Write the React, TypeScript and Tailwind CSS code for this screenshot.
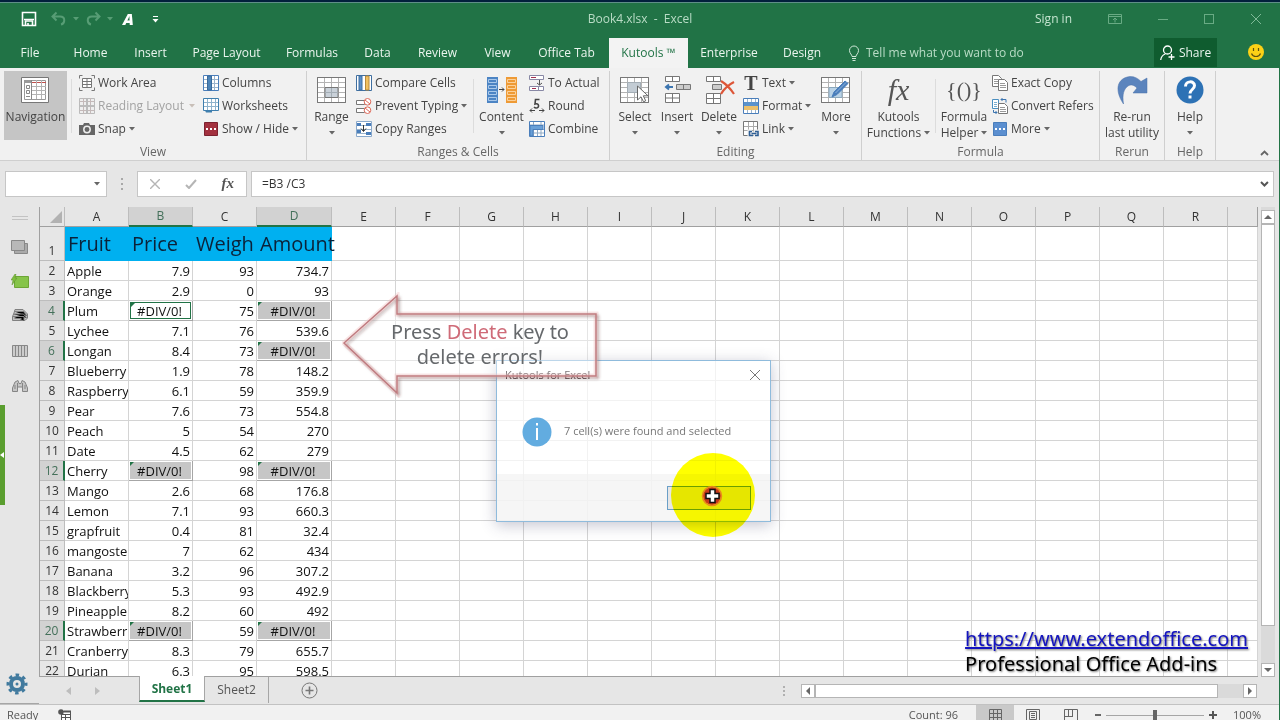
import type { ReactNode } from 'react'

const fruits: [string, string, string, string][] = [
  ['Apple', '7.9', '93', '734.7'],
  ['Orange', '2.9', '0', '93'],
  ['Plum', '#DIV/0!', '75', '#DIV/0!'],
  ['Lychee', '7.1', '76', '539.6'],
  ['Longan', '8.4', '73', '#DIV/0!'],
  ['Blueberry', '1.9', '78', '148.2'],
  ['Raspberry', '6.1', '59', '359.9'],
  ['Pear', '7.6', '73', '554.8'],
  ['Peach', '5', '54', '270'],
  ['Date', '4.5', '62', '279'],
  ['Cherry', '#DIV/0!', '98', '#DIV/0!'],
  ['Mango', '2.6', '68', '176.8'],
  ['Lemon', '7.1', '93', '660.3'],
  ['grapfruit', '0.4', '81', '32.4'],
  ['mangoste', '7', '62', '434'],
  ['Banana', '3.2', '96', '307.2'],
  ['Blackberry', '5.3', '93', '492.9'],
  ['Pineapple', '8.2', '60', '492'],
  ['Strawberr', '#DIV/0!', '59', '#DIV/0!'],
  ['Cranberry', '8.3', '79', '655.7'],
  ['Durian', '6.3', '95', '598.5'],
]

const columns = 'ABCDEFGHIJKLMNOPQR'.split('')
const emptyColumns = [...columns.slice(4), 'S']

const tabs = [
  { name: 'File', width: 'w-[60px]' },
  { name: 'Home', width: 'w-[61px]' },
  { name: 'Insert', width: 'w-[59px]' },
  { name: 'Page Layout', width: 'w-[93px]' },
  { name: 'Formulas', width: 'w-[78px]' },
  { name: 'Data', width: 'w-[53px]' },
  { name: 'Review', width: 'w-[67px]' },
  { name: 'View', width: 'w-[53px]' },
  { name: 'Office Tab', width: 'w-[85px]' },
  { name: 'Kutools ™', width: 'w-[79px]' },
  { name: 'Enterprise', width: 'w-[82px]' },
  { name: 'Design', width: 'w-[64px]' },
]

function Caret({ className = 'text-[#666]' }: { className?: string }) {
  return (
    <svg viewBox="0 0 6 4" className={`h-1 w-1.5 shrink-0 ${className}`} fill="currentColor">
      <path d="M0 0h6L3 3.5z" />
    </svg>
  )
}

function Icon({ children, size = 16 }: { children: ReactNode; size?: 16 | 32 }) {
  return (
    <svg
      viewBox={size === 16 ? '0 0 16 16' : '0 0 32 28'}
      className={size === 16 ? 'h-4 w-4 shrink-0' : 'h-7 w-8 shrink-0'}
      fill="none"
      stroke="#777"
    >
      {children}
    </svg>
  )
}

/* ---- large ribbon icons, 32x28 ---- */

const sheetGrid = (
  <>
    <path d="M1.5 1.5h28v25h-28z" fill="#fff" />
    <path d="M2 6.5h27M2 11.5h27M2 16.5h27M2 21.5h27M8.5 2v24M15.5 2v24M22.5 2v24" stroke="#b3b3b3" />
    <path d="M1.5 1.5h28v25h-28z" />
  </>
)

const NavigationIcon = () => (
  <Icon size={32}>
    <path d="M1.5 1.5h27v25h-27z" fill="#fff" />
    <path d="M4.5 4.5h21v19h-21z" stroke="#999" fill="#fff" />
    <path d="M4 4h8v3H4z" fill="#999" stroke="none" />
    <path d="M12 6.5h14" stroke="#c0504d" />
    <path d="M12 10.5h14M12 14.5h14M12 18.5h14M16.5 4v19M21.5 4v19" stroke="#b3b3b3" />
    <path d="M11.5 4v19M6.5 9.5h3v3h-3zM6.5 14.5h3v3h-3zM6 20.5h4" stroke="#888" />
  </Icon>
)

const RangeIcon = () => (
  <Icon size={32}>
    {sheetGrid}
    <path d="M9 11.5h13v10H9z" fill="#c9d1d9" stroke="#777" />
    <path d="M9 16.5h13M15.5 12v9" stroke="#a3adb5" />
  </Icon>
)

const ContentIcon = () => (
  <Icon size={32}>
    <path d="M1 1h11v26H1z" fill="#4c84c4" stroke="none" />
    <path d="M20 1h11v26H20z" fill="#ee9a35" stroke="none" />
    <path d="M2.5 3.5h8v3h-8zM2.5 9.5h8v3h-8zM2.5 15.5h8v3h-8zM2.5 21.5h8v3h-8z" stroke="#a9c8ea" />
    <path d="M21.5 3.5h8v3h-8zM21.5 9.5h8v3h-8zM21.5 15.5h8v3h-8zM21.5 21.5h8v3h-8z" stroke="#fbd19b" />
    <path d="M13 13.5h5M16 11.5l2 2-2 2" stroke="#444" />
  </Icon>
)

const SelectIcon = () => (
  <Icon size={32}>
    {sheetGrid}
    <path d="M8.5 6.5h13v10h-13z" fill="#c3ccd4" stroke="#a3adb5" />
    <path d="M18.5 10v14l3.5-3.2 2.5 5 2.2-1-2.4-5h4.7z" fill="#fff" stroke="#666" />
  </Icon>
)

const InsertIcon = () => (
  <Icon size={32}>
    <path d="M4.5.5h14v5h-14zM11.5.5v5M4.5 17.5h14v9h-14zM11.5 17.5v9M4.5 22h14" fill="#fff" />
    <path d="M15.5 8.5h14v5h-14zM22.5 8.5v5" fill="#ccc" />
    <path d="M5 11h7M8 8.5L5 11l3 2.5" stroke="#3c75b0" strokeWidth="2" />
  </Icon>
)

const DeleteIcon = () => (
  <Icon size={32}>
    <path d="M3.5.5h14v5h-14zM10.5.5v5M3.5 17.5h14v10h-14zM10.5 17.5v10M3.5 22.5h14" fill="#fff" />
    <path d="M9.5 8.5h9v5h-9z" fill="#ccc" />
    <path d="M18 5c5 3 9 7 13 13M31 6c-6 3-10 7-13 12" stroke="#dd5638" strokeWidth="2.2" />
  </Icon>
)

const MoreIcon = () => (
  <Icon size={32}>
    {sheetGrid}
    <path d="M9 11.5h13v10H9z" fill="#b9d2e6" stroke="#8ba8bd" />
    <path d="M12 21l2-5L25 5l3 2.5L17 18.5z" fill="#4a7ebb" stroke="#4a7ebb" />
    <path d="M15.5 17L26 6.5" stroke="#8fb3de" />
  </Icon>
)

const FxIcon = () => (
  <span className="flex h-7 items-center font-['Liberation_Serif',serif] text-[30px] leading-7 text-[#555] italic">fx</span>
)

const BracesIcon = () => (
  <span className="flex h-7 items-center font-['Liberation_Serif',serif] text-[22px] leading-7 text-[#555]">{'{()}'}</span>
)

const RerunIcon = () => (
  <Icon size={32}>
    <path d="M7.5 28C-2 14 1 2 14 .5c5 0 8 2 11 5L31 2v15H17l4-5c-3-3-6-4-9-2-4 3-6 8-4.5 18z" fill="#5b84bd" stroke="#4a70a8" strokeWidth=".5" />
  </Icon>
)

const HelpIcon = () => (
  <Icon size={32}>
    <circle cx="16" cy="14" r="13.5" fill="#2d72b5" stroke="none" />
    <path d="M11.5 10.5c0-6 9-6 9-1 0 4-4.5 4-4.5 8" stroke="#fff" strokeWidth="3" />
    <path d="M14.5 19.5h3v3h-3z" fill="#fff" stroke="none" />
  </Icon>
)

/* ---- small ribbon icons, 16x16 ---- */

const WorkAreaIcon = () => (
  <Icon>
    <path d="M3.5.5h-3v3M12.5.5h3v3M.5 12.5v3h3M15.5 12.5v3h-3" />
    <path d="M3.5 3.5h9v9h-9zM3.5 6.5h9M3.5 9.5h9M8 3.5v9" fill="#fff" />
  </Icon>
)

const ReadingIcon = () => (
  <Icon>
    <path d="M.5.5h15v15H.5z" fill="#eee" stroke="#bbb" />
    <path d="M.5 3.5h15M.5 12.5h15M4.5 0v16M11.5 0v16" stroke="#c4b9b9" />
    <path d="M.5 8h15M8 0v16" stroke="#bbb" strokeWidth="2" />
  </Icon>
)

const SnapIcon = () => (
  <Icon>
    <path d="M0 4h4l1-2h5l1 2h5v10H0z" fill="#666" stroke="none" />
    <circle cx="8" cy="8.5" r="3.2" stroke="#eee" strokeWidth="1.5" />
  </Icon>
)

const ColumnsIcon = () => (
  <Icon>
    <path d="M.5.5h15v15H.5z" fill="#fff" stroke="#4a7ebb" />
    <path d="M1 4.5h14M1 8.5h14M1 12.5h14M11.5 1v14" stroke="#9bb4cc" />
    <path d="M4.5 1h4v14h-4z" fill="#4c84b8" stroke="#39699b" />
  </Icon>
)

const WorksheetsIcon = () => (
  <Icon>
    <path d="M.5.5h15v12H.5z" fill="#fff" stroke="#3f7fae" />
    <path d="M1 4.5h14M1 8.5h14M4.5 1v11M8.5 1v11M12.5 1v11" stroke="#8fb3cc" />
    <path d="M2 12.5h7v2H3z" fill="#3f7fae" stroke="none" />
  </Icon>
)

const ShowHideIcon = () => (
  <Icon>
    <path d="M1.5 1.5h13v13h-13z" fill="#a3313f" stroke="#7c2230" />
    <path d="M3 8h2M7 8h2M11 8h2" stroke="#fff" strokeWidth="2" />
  </Icon>
)

const CompareIcon = () => (
  <Icon>
    <path d="M.5.5h15v15H.5z" fill="#fff" stroke="#3f6fa0" />
    <path d="M3 1h3v14H3z" fill="#5b8fc9" stroke="#3f6fa0" />
    <path d="M9.5 1H13v14H9.5z" fill="#f0c060" stroke="#b8893a" />
  </Icon>
)

const PreventIcon = () => (
  <Icon>
    <path d="M.5 2.5h8v4h-8zM.5 10.5h8v4h-8z" fill="#fff" />
    <circle cx="11.5" cy="3.8" r="3.3" stroke="#dd6a5a" fill="#fff" />
    <circle cx="11.5" cy="12.2" r="3.3" stroke="#dd6a5a" fill="#fff" />
    <path d="M9 2l5 4M9 10l5 4" stroke="#dd6a5a" />
  </Icon>
)

const CopyRangesIcon = () => (
  <Icon>
    <path d="M.5.5h15v15H.5z" fill="#fff" stroke="#8aa9cb" />
    <path d="M1 4.5h14M1 8.5h14M1 12.5h14" stroke="#9bb4cc" />
    <path d="M1 2h4v3H1zM10 2h5v3h-5zM1 9h4v3H1zM10 11h5v3h-5z" fill="#4a7ebb" stroke="none" />
    <path d="M7.5 4v6M5 7.5l2.5 3 2.5-3" stroke="#333" />
  </Icon>
)

const ToActualIcon = () => (
  <Icon>
    <path d="M.5.5h14v4H.5zM.5 11.5h9v4h-9zM9.5 11.5h5v4h-5z" fill="#fff" stroke="#8888a5" />
    <path d="M2 2.5h5M3 13.5h4" stroke="#a33050" />
    <path d="M10.5 5v5M8 8l2.5 2L13 8" stroke="#555" />
  </Icon>
)

const RoundIcon = () => (
  <Icon>
    <path d="M10.5 1.5h-4L6 6c4-1.5 5 4 1 4-1 0-1.5-.5-2-1" stroke="#444" strokeWidth="1.6" />
    <path d="M6 12.5H1M3 10.5l-2 2 2 2M10 12.5h5M13 10.5l2 2-2 2" stroke="#444" />
  </Icon>
)

const CombineIcon = () => (
  <Icon>
    <path d="M.5.5h15v15H.5z" fill="#fff" stroke="#4a7ebb" />
    <path d="M1 4h14M1 8.5h14M1 12h14M4.5 1v14M8.5 8v7M12 1v14" stroke="#8fa9c4" />
    <path d="M1 4.5h13v4H4V15H1z" fill="#69a0d8" stroke="#4a7ebb" />
  </Icon>
)

const TextIcon = () => (
  <span className="w-4 text-center font-['Liberation_Serif',serif] text-[20px] leading-4 font-bold text-[#444]">T</span>
)

const FormatIcon = () => (
  <Icon>
    <path d="M.5.5h15v15H.5z" fill="#fff" stroke="#4a7ebb" />
    <path d="M4.5 1v14M8.5 1v14M12.5 1v14" stroke="#9bb4cc" />
    <path d="M1 4h14v4H1z" fill="#5b93cc" stroke="none" />
    <path d="M1 8h14v4H1z" fill="#ecc06a" stroke="none" />
  </Icon>
)

const LinkIcon = () => (
  <Icon>
    <path d="M.5.5h14v14H.5z" fill="#fff" />
    <path d="M1 5.5h13M1 9.5h13M5.5 1v13M10.5 1v13" stroke="#aaa" />
    <path d="M9 10.5H6.5v4H9M11 10.5h4v4h-4M8 12.5h5" stroke="#f0f0f0" strokeWidth="4" />
    <path d="M9 10.5H6.5v4H10M12 10.5h3v4h-3M8.5 12.5h5" stroke="#2f5f95" strokeWidth="1.6" />
  </Icon>
)

const ExactCopyIcon = () => (
  <Icon>
    <path d="M.5.5h6l3 3v8h-9z" fill="#fff" />
    <path d="M2 4.5h4M2 6.5h4M2 8.5h4" stroke="#999" />
    <path d="M6.5 4.5h6l3 3v8h-9z" fill="#fff" />
    <path d="M8 8.5h5M8 10.5h6M8 12.5h6" stroke="#999" />
  </Icon>
)

const ConvertIcon = () => (
  <Icon>
    <path d="M.5 1.5h6v9h-6z" fill="#fff" stroke="#4a8fc0" />
    <path d="M2 4.5h3M2 6.5h3M2 8.5h3" stroke="#7aaed0" />
    <path d="M6.5 5.5h6l3 3v7h-9z" fill="#fff" />
    <path d="M8 9.5h5M8 11.5h6M8 13.5h6" stroke="#999" />
    <path d="M9 1.5h5v3M10.5 0L9 1.5 10.5 3M1.5 12v2.5H5M3.5 13L5 14.5 3.5 16" stroke="#3c75b0" />
  </Icon>
)

const BlueMoreIcon = () => (
  <Icon>
    <path d="M1.5 1.5h13v13h-13z" fill="#5b8fd0" stroke="#4a7ebb" />
    <path d="M3 8h2M7 8h2M11 8h2" stroke="#fff" strokeWidth="2" />
  </Icon>
)

/* ---- ribbon pieces ---- */

function BigButton({ icon, lines, width, caret, active }: {
  icon: ReactNode
  lines: string[]
  width: string
  caret?: boolean
  active?: boolean
}) {
  return (
    <button type="button" className={`flex h-[69px] shrink-0 flex-col items-center pt-[5px] ${width} ${active ? 'bg-[#c5c5c5]' : ''}`}>
      {icon}
      <span className="mt-[5px] leading-4 whitespace-nowrap">{lines[0]}</span>
      <span className="flex h-4 items-center gap-[3px] leading-4 whitespace-nowrap">
        {lines[1]}
        {caret && <Caret />}
      </span>
    </button>
  )
}

function SmallButton({ icon, label, caret, disabled }: { icon: ReactNode; label: string; caret?: boolean; disabled?: boolean }) {
  return (
    <button
      type="button"
      disabled={disabled}
      className={`flex h-[23px] items-center gap-[3px] whitespace-nowrap ${disabled ? 'text-[#a3a3a3]' : ''}`}
    >
      {icon}
      <span>{label}</span>
      {caret && <Caret className={disabled ? 'ml-0.5 text-[#c8bfb8]' : 'text-[#666]'} />}
    </button>
  )
}

function Stack({ width, children }: { width: string; children: ReactNode }) {
  return <div className={`flex shrink-0 flex-col ${width}`}>{children}</div>
}

function Divider() {
  return <div className="mt-2 h-[54px] w-px shrink-0 bg-[#dcdcdc]" />
}

function Group({ label, width, children }: { label: string; width: string; children: ReactNode }) {
  return (
    <section aria-label={label} className={`flex shrink-0 flex-col border-r border-[#cfcfcf] ${width}`}>
      <div className="flex h-[73px] shrink-0">{children}</div>
      <div className="text-center leading-4 text-[#666]">{label}</div>
    </section>
  )
}

function TitleBar() {
  return (
    <header className="bg-[#217346] text-[#b9dcc6]">
      <div className="h-[3px] border-b border-[#5f8f88] bg-[#02203c]" />
      <div className="grid h-[35px] grid-cols-[1fr_auto_1fr] items-center pb-[3px]">
        <div className="flex items-center pl-[21px]">
          <button type="button" aria-label="Save">
            <svg viewBox="0 0 16 16" className="h-4 w-4" fill="none" stroke="#fff" strokeWidth="1.6">
              <path d="M1.5 1.5h13v13h-13zM3 8.5h10" />
              <path d="M4.5 14v-4h7v4M7 12v2" />
            </svg>
          </button>
          <button type="button" aria-label="Undo" className="ml-3.5 flex items-center gap-1.5 text-[#579d75]">
            <svg viewBox="0 0 16 16" className="h-4 w-4" fill="none" stroke="currentColor" strokeWidth="2">
              <path d="M5.5 1.5l-4 4 4 4M2 5.5h7c6 0 5 7 1 8" />
            </svg>
            <Caret className="text-[#579d75]" />
          </button>
          <button type="button" aria-label="Redo" className="ml-1.5 flex items-center gap-1.5 text-[#579d75]">
            <svg viewBox="0 0 16 16" className="h-4 w-4" fill="none" stroke="currentColor" strokeWidth="2">
              <path d="M10.5 1.5l4 4-4 4M14 5.5H7c-6 0-5 7-1 8" />
            </svg>
            <Caret className="text-[#579d75]" />
          </button>
          <button type="button" className="ml-2.5 text-[16px] leading-4 font-black text-white italic">A</button>
          <button type="button" aria-label="Customize toolbar" className="ml-[18px]">
            <svg viewBox="0 0 7 7" className="h-[7px] w-[7px]" fill="#fff">
              <path d="M1 0h5v1H1zM.5 3h6l-3 3.5z" />
            </svg>
          </button>
        </div>
        <h1 className="text-[12px] whitespace-pre">Book4.xlsx  -  Excel</h1>
        <div className="flex items-center justify-end pr-[18px]">
          <button type="button" className="mr-9 text-[12px] text-[#c5e5d0]">Sign in</button>
          <svg viewBox="0 0 14 12" className="mr-9 h-3 w-3.5" fill="none" stroke="#69ab84">
            <path d="M.5 1.5h13v9H.5zM1 3.5h12M7 9.5v-4M5 7l2-2 2 2" />
          </svg>
          <button type="button" aria-label="Minimize" className="mr-9 h-px w-2.5 bg-[#69ab84]" />
          <button type="button" aria-label="Maximize" className="mr-9 h-2.5 w-2.5 border border-[#69ab84]" />
          <button type="button" aria-label="Close">
            <svg viewBox="0 0 12 12" className="h-3 w-3" stroke="#7fba97">
              <path d="M1 1l10 10M11 1L1 11" />
            </svg>
          </button>
        </div>
      </div>
      <nav className="flex h-[30px] text-[12px] text-[#eaf5ee]">
        {tabs.map((tab) => (
          <button
            key={tab.name}
            type="button"
            className={`shrink-0 whitespace-nowrap ${tab.width} ${tab.name === 'Kutools ™' ? 'bg-[#f3f3f3] text-[#217346]' : ''}`}
          >
            {tab.name}
          </button>
        ))}
        <label className="ml-3.5 flex items-center gap-1.5">
          <svg viewBox="0 0 12 16" className="h-4 w-3" fill="none" stroke="#cfe8d8">
            <path d="M4 11.5c0-2-2.5-3-2.5-6a4.5 4.5 0 019 0c0 3-2.5 4-2.5 6zM4 13.5h4M4.5 15.5h3" />
          </svg>
          <input aria-label="Tell me" placeholder="Tell me what you want to do" className="w-[200px] bg-transparent placeholder:text-[#b9dcc6]" />
        </label>
        <button type="button" className="mr-[31px] ml-auto flex h-[29px] w-[63px] items-center justify-center gap-1 bg-[#0f5c2f]">
          <svg viewBox="0 0 15 16" className="h-4 w-[15px]" fill="none" stroke="#fff" strokeWidth="1.3">
            <circle cx="7.5" cy="5" r="4" />
            <path d="M.7 15c.5-3.5 2-5 4.5-6M8.5 12h6M11.5 9v6" />
          </svg>
          Share
        </button>
        <svg viewBox="0 0 16 16" className="mt-1.5 mr-4 h-4 w-4">
          <circle cx="8" cy="8" r="8" fill="#fcd116" />
          <path d="M5.5 4v3M10.5 4v3M3.5 9.5c1.5 4 7.5 4 9 0" fill="none" stroke="#5f5210" strokeWidth="1.2" />
        </svg>
      </nav>
    </header>
  )
}

function Ribbon() {
  return (
    <div className="flex h-[93px] border-b border-[#cfcfcf] bg-[#f1f1f1] pt-[3px] text-[12px] text-[#444]">
      <Group label="View" width="w-[307px]">
        <BigButton icon={<NavigationIcon />} lines={['Navigation']} width="ml-1 w-[63px] mr-1" active />
        <Divider />
        <Stack width="ml-[7px] w-[124px]">
          <SmallButton icon={<WorkAreaIcon />} label="Work Area" />
          <SmallButton icon={<ReadingIcon />} label="Reading Layout" caret disabled />
          <SmallButton icon={<SnapIcon />} label="Snap" caret />
        </Stack>
        <Stack width="w-[100px]">
          <SmallButton icon={<ColumnsIcon />} label="Columns" />
          <SmallButton icon={<WorksheetsIcon />} label="Worksheets" />
          <SmallButton icon={<ShowHideIcon />} label="Show / Hide" caret />
        </Stack>
      </Group>
      <Group label="Ranges & Cells" width="w-[303px]">
        <BigButton icon={<RangeIcon />} lines={['Range']} width="w-[49px]" caret />
        <Stack width="w-[117px]">
          <SmallButton icon={<CompareIcon />} label="Compare Cells" />
          <SmallButton icon={<PreventIcon />} label="Prevent Typing" caret />
          <SmallButton icon={<CopyRangesIcon />} label="Copy Ranges" />
        </Stack>
        <Divider />
        <BigButton icon={<ContentIcon />} lines={['Content']} width="w-[55px]" caret />
        <Stack width="w-[80px]">
          <SmallButton icon={<ToActualIcon />} label="To Actual" />
          <SmallButton icon={<RoundIcon />} label="Round" />
          <SmallButton icon={<CombineIcon />} label="Combine" />
        </Stack>
      </Group>
      <Group label="Editing" width="w-[252px]">
        <BigButton icon={<SelectIcon />} lines={['Select']} width="ml-1 w-[42px]" caret />
        <BigButton icon={<InsertIcon />} lines={['Insert']} width="w-[42px]" caret />
        <BigButton icon={<DeleteIcon />} lines={['Delete']} width="w-[42px]" caret />
        <Stack width="ml-[3px] w-[73px]">
          <SmallButton icon={<TextIcon />} label="Text" caret />
          <SmallButton icon={<FormatIcon />} label="Format" caret />
          <SmallButton icon={<LinkIcon />} label="Link" caret />
        </Stack>
        <BigButton icon={<MoreIcon />} lines={['More']} width="w-[40px]" caret />
      </Group>
      <Group label="Formula" width="w-[238px]">
        <BigButton icon={<FxIcon />} lines={['Kutools', 'Functions']} width="w-[73px]" caret />
        <Divider />
        <BigButton icon={<BracesIcon />} lines={['Formula', 'Helper']} width="w-[56px]" caret />
        <Stack width="w-[104px]">
          <SmallButton icon={<ExactCopyIcon />} label="Exact Copy" />
          <SmallButton icon={<ConvertIcon />} label="Convert Refers" />
          <SmallButton icon={<BlueMoreIcon />} label="More" caret />
        </Stack>
      </Group>
      <Group label="Rerun" width="w-[65px]">
        <BigButton icon={<RerunIcon />} lines={['Re-run', 'last utility']} width="w-[64px]" />
      </Group>
      <Group label="Help" width="w-[51px]">
        <BigButton icon={<HelpIcon />} lines={['Help']} width="w-[50px]" caret />
      </Group>
      <button type="button" aria-label="Collapse the ribbon" className="mt-auto mr-2.5 mb-1 ml-auto">
        <svg viewBox="0 0 9 6" className="h-1.5 w-[9px]" fill="none" stroke="#666" strokeWidth="1.8">
          <path d="M1 5l3.5-3.5L8 5" />
        </svg>
      </button>
    </div>
  )
}

function FormulaBar() {
  return (
    <div className="flex h-[46px] items-start px-[5px] pt-2.5">
      <div className="flex h-[26px] w-[102px] items-center border border-[#c6c6c6] bg-white pr-1.5">
        <input aria-label="Name box" className="w-full min-w-0 bg-transparent px-1 text-[12px]" />
        <Caret />
      </div>
      <span className="mx-3.5 mt-[7px] flex flex-col gap-[3px]">
        <i className="h-0.5 w-0.5 bg-[#a8a8a8]" />
        <i className="h-0.5 w-0.5 bg-[#a8a8a8]" />
        <i className="h-0.5 w-0.5 bg-[#a8a8a8]" />
      </span>
      <div className="mr-1 flex h-[26px] w-[110px] items-center justify-between border border-[#c6c6c6] bg-white px-3">
        <button type="button" aria-label="Cancel">
          <svg viewBox="0 0 10 10" className="h-2.5 w-2.5" stroke="#b5b5b5" strokeWidth="1.4">
            <path d="M0 0l10 10M10 0L0 10" />
          </svg>
        </button>
        <button type="button" aria-label="Enter">
          <svg viewBox="0 0 12 10" className="h-2.5 w-3" fill="none" stroke="#b5b5b5" strokeWidth="2">
            <path d="M1 6l3 3 7-8" />
          </svg>
        </button>
        <button type="button" className="pb-0.5 font-['Liberation_Serif',serif] text-[15px] leading-4 font-bold text-[#555] italic">fx</button>
      </div>
      <div className="flex h-[26px] flex-1 items-center border border-[#c6c6c6] bg-white pr-1 pl-2.5">
        <input aria-label="Formula" defaultValue="=B3 /C3" className="w-full bg-transparent text-[12px] text-[#333]" />
        <svg viewBox="0 0 9 6" className="h-1.5 w-[9px]" fill="none" stroke="#555" strokeWidth="2">
          <path d="M1 1l3.5 3.5L8 1" />
        </svg>
      </div>
    </div>
  )
}

function SidePanel() {
  return (
    <aside className="flex w-[39px] shrink-0 flex-col items-center border-b border-[#a6a6a6] pt-[9px]">
      <div className="h-1 w-4 border-y border-[#c2c2c2]" />
      <svg viewBox="0 0 18 14" className="mt-5 h-3.5 w-[18px]" stroke="#888">
        <path d="M3.5 3.5h13v10h-13z" fill="#aaa" />
        <path d="M.5.5h13v10H.5z" fill="#b8b8b8" />
      </svg>
      <svg viewBox="0 0 18 14" className="mt-5 h-3.5 w-[18px]">
        <path d="M3.5 2.5h14v11h-14z" fill="#86c44a" stroke="#6da536" />
        <path d="M4 0L0 6h2l-1 5 5-7H4l1-4z" fill="#7fbf3f" stroke="#5c8f2e" strokeWidth=".5" />
      </svg>
      <svg viewBox="0 0 18 14" className="mt-5 h-3.5 w-[18px]" stroke="#808080">
        <path d="M4 1.5h8L16.5 6v4L14 12.5H1.5v-4L3 5z" fill="#c0c0c0" />
        <path d="M3.5 3.5h9L16 8M2.5 6h10l3 4M1.5 8.5H13v4M3.5 10.5h7" />
      </svg>
      <svg viewBox="0 0 16 12" className="mt-[23px] h-3 w-4" stroke="#888">
        <path d="M.5.5h15v11H.5zM3.5 1v10M6.5 1v10M9.5 1v10M12.5 1v10" fill="#ccc" />
      </svg>
      <svg viewBox="0 0 16 12" className="mt-[23px] h-3 w-4" fill="#c6c6c6" stroke="#858585">
        <path d="M.5 11.5V8L3 2l3-1.5 1 3h2l1-3L13 2l2.5 6v3.5h-5V7h-5v4.5z" />
        <path d="M5.5 3v5M10.5 3v5M3 5v4M13 5v4" />
      </svg>
      <div className="mt-[13px] flex h-[100px] w-[5px] items-center self-start bg-[#5a9e2f]">
        <svg viewBox="0 0 4 6" className="h-1.5 w-1" fill="#fff">
          <path d="M4 0v6L0 3z" />
        </svg>
      </div>
      <svg viewBox="0 0 22 22" className="mt-auto mr-1.5 mb-2 h-[22px] w-[22px]" fill="none" stroke="#417a9e">
        <circle cx="11" cy="11" r="6" strokeWidth="4" />
        <circle cx="11" cy="11" r="9" strokeWidth="3" strokeDasharray="3.5 3.57" strokeDashoffset="1.7" />
        <circle cx="11" cy="11" r="1.5" fill="#417a9e" stroke="none" />
      </svg>
    </aside>
  )
}

function Cell({ value, active }: { value: string; active?: boolean }) {
  if (value !== '#DIV/0!') {
    return <td className="border-r border-b border-[#d4d4d4] p-0 pt-px pr-0.5 text-right">{value}</td>
  }
  return (
    <td className="border-r border-b border-[#a6a6a6] p-px">
      <div
        className={`relative h-[17px] pr-0.5 text-center ${active ? 'border border-[#217346] bg-white leading-4' : 'bg-[#c6c6c6] leading-[18px]'}`}
      >
        <svg viewBox="0 0 4 4" className="absolute top-0 left-0 h-1 w-1" fill="#217346">
          <path d="M0 0h4L0 4z" />
        </svg>
        {value}
      </div>
    </td>
  )
}

function Sheet() {
  return (
    <div className="min-h-0 flex-1 overflow-hidden border-b border-l border-[#a0a0a0] bg-white">
      <table className="w-full table-fixed border-separate border-spacing-0 text-[13px] text-[#111]">
        <colgroup>
          <col className="w-[25px]" />
          <col className="w-16" />
          <col className="w-16" />
          <col className="w-16" />
          <col className="w-[75px]" />
          {columns.slice(4).map((c) => (
            <col key={c} className="w-16" />
          ))}
          <col />
        </colgroup>
        <thead>
          <tr className="h-5 bg-[#e6e6e6] text-[12px] leading-[18px] text-[#333]">
            <th className="border-r border-b border-[#bdbdbd] border-b-[#a0a0a0] p-0" aria-label="Select all">
              <svg viewBox="0 0 12 12" className="mr-0.5 ml-auto h-3 w-3" fill="#b2b2b2">
                <path d="M12 0v12H0z" />
              </svg>
            </th>
            {columns.map((c) => (
              <th
                key={c}
                className={`border-r p-0 font-normal ${
                  c === 'B' || c === 'D'
                    ? 'border-b-2 border-[#bdbdbd] border-b-[#217346] bg-[#d2d2d2] text-[#44705a]'
                    : 'border-b border-[#bdbdbd] border-b-[#a0a0a0]'
                }`}
              >
                {c}
              </th>
            ))}
            <th className="border-r border-b border-[#a0a0a0] p-0" />
          </tr>
        </thead>
        <tbody>
          <tr className="h-[34px] text-[20px] leading-[30px] text-[#0b2239]">
            <th className="border-r border-b border-[#bdbdbd] bg-[#e6e6e6] p-0 align-bottom text-[12px] leading-[18px] font-normal text-[#333]">1</th>
            <td className="bg-[#00b0f0] p-0 pl-[3px]">Fruit</td>
            <td className="bg-[#00b0f0] p-0 pl-[3px]">Price</td>
            <td className="bg-[#00b0f0] p-0 pl-[3px]">Weigh</td>
            <td className="bg-[#00b0f0] p-0 pl-[3px] whitespace-nowrap">Amount</td>
            {emptyColumns.map((c) => (
              <td key={c} className="border-r border-b border-[#d4d4d4]" />
            ))}
          </tr>
          {fruits.map(([name, price, weight, amount], i) => {
            const selected = amount === '#DIV/0!'
            return (
              <tr key={name} className="h-5 leading-[18px]">
                <th
                  className={`border-b border-[#bdbdbd] p-0 pt-px text-[12px] font-normal ${
                    selected ? 'border-r-2 border-r-[#217346] bg-[#d2d2d2] text-[#44705a]' : 'border-r bg-[#e6e6e6] text-[#333]'
                  }`}
                >
                  {i + 2}
                </th>
                <td className="overflow-hidden border-r border-b border-[#d4d4d4] p-0 pt-px pl-0.5 whitespace-nowrap">{name}</td>
                <Cell value={price} active={i === 2} />
                <Cell value={weight} />
                <Cell value={amount} />
                {emptyColumns.map((c) => (
                  <td key={c} className="border-r border-b border-[#d4d4d4] p-0" />
                ))}
              </tr>
            )
          })}
        </tbody>
      </table>
    </div>
  )
}

function ArrowButton({ label, d }: { label: string; d: string }) {
  return (
    <button type="button" aria-label={label} className="flex h-3.5 w-3.5 shrink-0 items-center justify-center border border-[#b5b5b5] bg-white">
      <svg viewBox="0 0 8 8" className="h-2 w-2" fill="#666">
        <path d={d} />
      </svg>
    </button>
  )
}

function SheetTabs() {
  return (
    <div className="flex h-[27px] shrink-0 items-start text-[12px]">
      <button type="button" aria-label="Previous sheet" className="mt-2.5 ml-[27px]">
        <svg viewBox="0 0 5 8" className="h-2 w-[5px]" fill="#bdbdbd"><path d="M5 0v8L0 4z" /></svg>
      </button>
      <button type="button" aria-label="Next sheet" className="mt-2.5 ml-6">
        <svg viewBox="0 0 5 8" className="h-2 w-[5px]" fill="#bdbdbd"><path d="M0 0v8l5-4z" /></svg>
      </button>
      <button type="button" className="-mt-px ml-[39px] h-[26px] w-[66px] border-x border-b-2 border-[#a6a6a6] border-b-[#217346] bg-white pt-0.5 font-bold text-[#217346]">Sheet1</button>
      <button type="button" className="h-[26px] w-16 border-r border-[#a6a6a6] text-[#555]">Sheet2</button>
      <button type="button" aria-label="New sheet" className="mt-[5px] ml-8">
        <svg viewBox="0 0 17 17" className="h-[17px] w-[17px]" fill="none" stroke="#777">
          <circle cx="8.5" cy="8.5" r="7.5" />
          <path d="M8.5 4.5v8M4.5 8.5h8" strokeWidth="1.6" />
        </svg>
      </button>
      <div className="mt-[7px] mr-[22px] ml-auto flex w-[474px] items-center">
        <span className="mr-4 flex flex-col gap-0.5">
          <i className="h-0.5 w-0.5 bg-[#b0b0b0]" />
          <i className="h-0.5 w-0.5 bg-[#b0b0b0]" />
          <i className="h-0.5 w-0.5 bg-[#b0b0b0]" />
        </span>
        <ArrowButton label="Scroll left" d="M6 0v8L2 4z" />
        <div className="flex h-3.5 flex-1 bg-[#dadada]">
          <div className="mr-[25px] flex-1 border border-[#b5b5b5] bg-white" />
        </div>
        <ArrowButton label="Scroll right" d="M2 0v8l4-4z" />
      </div>
    </div>
  )
}

function StatusBar() {
  return (
    <footer className="h-4 shrink-0 overflow-hidden border-t border-[#c2c2c2] bg-[#f1f1f1] text-[11px] text-[#555]">
      <div className="flex h-5 items-center">
        <span className="ml-[7px]">Ready</span>
        <svg viewBox="0 0 13 12" className="ml-5 h-3 w-[13px]" stroke="#555">
          <path d="M3.5 2.5h9v9h-9zM4 5.5h8M4 8.5h8M7.5 5v6" fill="#fff" />
          <path d="M6 2.5h7" strokeWidth="2" />
          <circle cx="3" cy="3" r="2.8" fill="#555" stroke="none" />
        </svg>
        <span className="mr-[18px] ml-auto">Count: 96</span>
        <button type="button" aria-label="Normal view" className="flex h-full w-[38px] items-center justify-center bg-[#c9c9c9]">
          <svg viewBox="0 0 13 13" className="h-[13px] w-[13px]" fill="none" stroke="#666">
            <path d="M.5.5h12v12H.5zM4.5 0v13M8.5 0v13M0 4.5h13M0 8.5h13" />
          </svg>
        </button>
        <button type="button" aria-label="Page layout view" className="ml-3">
          <svg viewBox="0 0 14 13" className="h-[13px] w-3.5" fill="none" stroke="#666">
            <path d="M.5.5h13v12H.5zM3.5 2.5h7v8h-7zM5 4.5h4M5 6.5h4M5 8.5h4" />
          </svg>
        </button>
        <button type="button" aria-label="Page break view" className="ml-6">
          <svg viewBox="0 0 14 13" className="h-[13px] w-3.5" fill="none" stroke="#666">
            <path d="M.5 12.5V.5h13v12M4.5 0v7M8.5 0v7M0 7.5h9" />
          </svg>
        </button>
        <button type="button" aria-label="Zoom out" className="ml-[17px] h-0.5 w-1.5 bg-[#666]" />
        <input
          type="range"
          aria-label="Zoom"
          className="mx-[5px] h-3 w-[98px] appearance-none bg-transparent [&::-webkit-slider-runnable-track]:h-px [&::-webkit-slider-runnable-track]:bg-[#a6a6a6] [&::-webkit-slider-thumb]:-mt-[5px] [&::-webkit-slider-thumb]:h-[11px] [&::-webkit-slider-thumb]:w-1 [&::-webkit-slider-thumb]:appearance-none [&::-webkit-slider-thumb]:bg-[#666]"
        />
        <button type="button" aria-label="Zoom in">
          <svg viewBox="0 0 8 8" className="h-2 w-2" stroke="#555" strokeWidth="2"><path d="M4 0v8M0 4h8" /></svg>
        </button>
        <span className="mr-[18px] ml-4">100%</span>
      </div>
    </footer>
  )
}

function Callout() {
  const arrow = 'M2 51L55 4v18h199v62H55v17z'
  return (
    <div className="absolute top-[292px] left-[342px] h-[106px] w-[260px] text-center">
      <svg viewBox="0 0 260 106" className="absolute inset-0 h-full w-full">
        <defs>
          <filter id="shade" x="-10%" y="-10%" width="120%" height="130%">
            <feDropShadow dx="2" dy="2" stdDeviation="1.5" floodColor="#4a2020" floodOpacity=".5" />
          </filter>
        </defs>
        <path d={arrow} fill="#fff" fillOpacity=".4" stroke="#f3c4c4" strokeWidth="5" strokeOpacity=".4" />
        <path d={arrow} fill="none" stroke="#c07c80" strokeWidth="1.5" filter="url(#shade)" />
      </svg>
      <p className="relative px-5 pt-[27px] pl-9 font-['Noto_Sans',sans-serif] text-[20px] leading-[25px] text-[#66696c]">
        Press <span className="text-[#cf6b78]">Delete</span> key to
        <br />
        delete errors!
      </p>
    </div>
  )
}

function MessageBox() {
  return (
    <div
      role="dialog"
      aria-label="Kutools for Excel"
      className="absolute top-[360px] left-[496px] flex h-[162px] w-[275px] flex-col border border-[#8fbbdc] bg-white/70 text-[11px] text-[#777] shadow-[0_3px_14px_rgba(60,60,100,0.3)]"
    >
      <div className="flex h-7 items-center justify-between pr-[9px] pl-2 text-[#1c1014]">
        Kutools for Excel
        <button type="button" aria-label="Close dialog">
          <svg viewBox="0 0 12 12" className="h-3 w-3" stroke="#777">
            <path d="M1 1l10 10M11 1L1 11" />
          </svg>
        </button>
      </div>
      <div className="flex flex-1 items-center gap-3 pl-[25px]">
        <svg viewBox="0 0 30 30" className="h-[30px] w-[30px]">
          <circle cx="15" cy="15" r="14.5" fill="#62ace0" />
          <path d="M15 11v12M15 6v2.5" stroke="#fff" strokeWidth="2" />
        </svg>
        7 cell(s) were found and selected
      </div>
      <div className="flex h-[47px] justify-end bg-[#f0f0f0]/60 pt-3 pr-[19px]">
        <button type="button" aria-label="OK" className="h-6 w-[84px] border border-[#6a9fc8] bg-[#e0e0e0]/70" />
      </div>
    </div>
  )
}

function Pointer() {
  return (
    <>
      <div className="pointer-events-none absolute top-[453px] left-[671px] h-[84px] w-[84px] rounded-full bg-[#ffff00] mix-blend-multiply" />
      <svg viewBox="0 0 24 24" className="pointer-events-none absolute top-[484px] left-[700px] h-6 w-6">
        <circle cx="12" cy="12" r="9" fill="#c8381c" />
        <circle cx="12" cy="12" r="9.5" fill="none" stroke="#e98a1c" strokeWidth="1.5" />
        <path d="M10 5.5h5v4h4v5h-4v4h-5v-4H6v-5h4z" fill="#fff" stroke="#111" strokeWidth="1.5" />
      </svg>
    </>
  )
}

export default function App() {
  return (
    <div className="relative flex h-screen w-full flex-col overflow-hidden bg-[#e6e6e6] font-['Open_Sans',sans-serif]">
      <TitleBar />
      <div className="flex min-h-0 flex-1 flex-col border-r border-[#217346]">
        <Ribbon />
        <FormulaBar />
        <main className="flex min-h-0 flex-1">
          <SidePanel />
          <div className="flex min-w-0 flex-1 flex-col">
            <div className="flex min-h-0 flex-1">
              <Sheet />
              <div className="mr-1 ml-[3px] flex w-3.5 shrink-0 flex-col bg-[#dadada] pt-[3px]">
                <ArrowButton label="Scroll up" d="M0 6h8L4 2z" />
                <div className="h-[402px] border border-[#b5b5b5] bg-white" />
                <div className="mt-auto">
                  <ArrowButton label="Scroll down" d="M0 2h8L4 6z" />
                </div>
              </div>
            </div>
            <SheetTabs />
          </div>
        </main>
        <StatusBar />
      </div>
      <MessageBox />
      <Callout />
      <Pointer />
      <div className="absolute right-8 bottom-[44px] font-['Noto_Sans',sans-serif] text-[20px] leading-[25px] text-black [text-shadow:1px_1px_2px_#777]">
        <a href="https://www.extendoffice.com" className="text-[#1414c0] underline">https://www.extendoffice.com</a>
        <p>Professional Office Add-ins</p>
      </div>
    </div>
  )
}
